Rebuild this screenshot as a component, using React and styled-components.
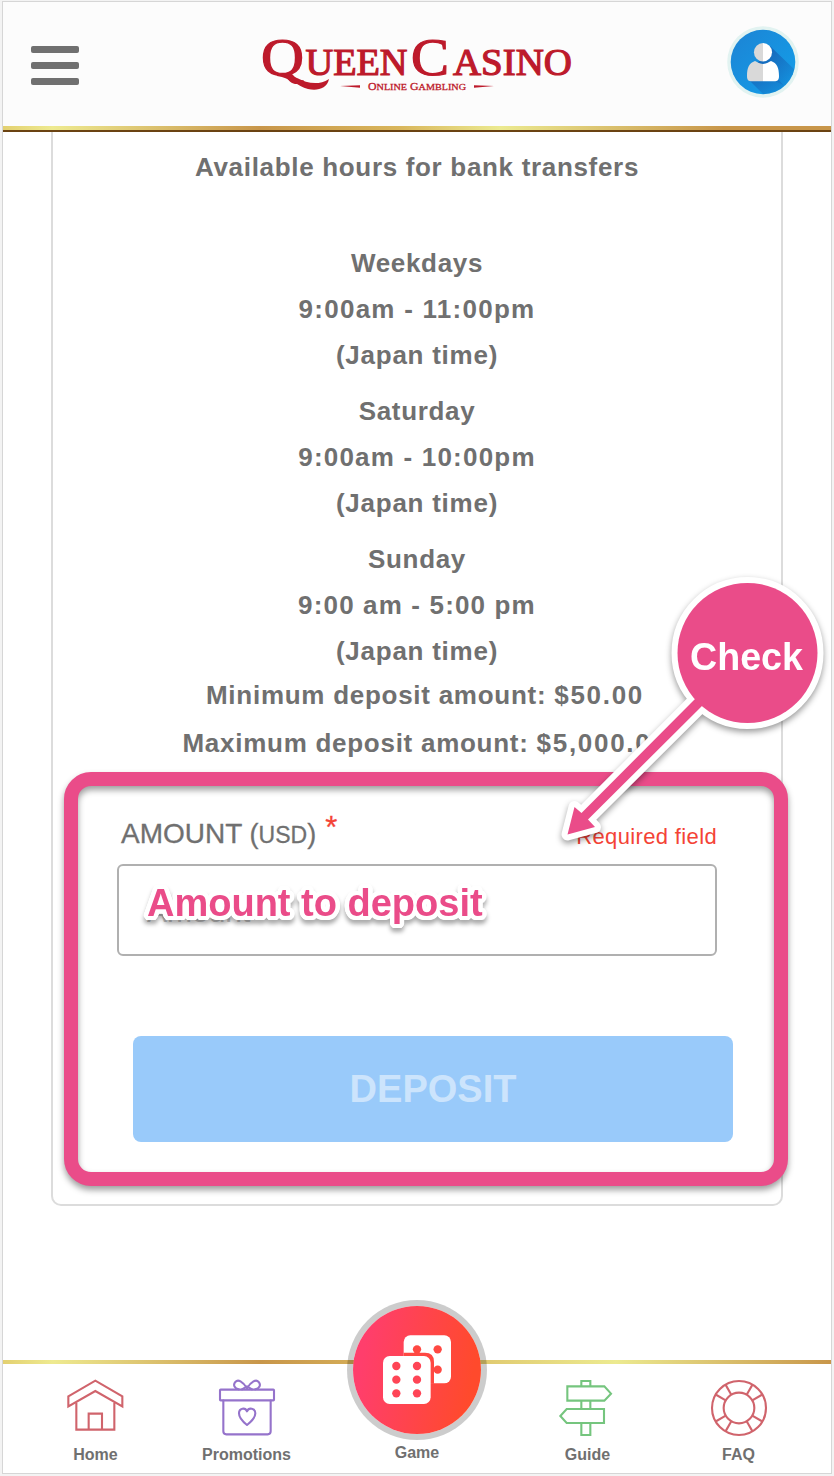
import React from 'react';
import styled, { createGlobalStyle } from 'styled-components';

const GlobalStyle = createGlobalStyle`
  * {
    box-sizing: border-box;
  }
  body {
    margin: 0;
    background: #f3f3f3;
    font-family: 'Liberation Sans', Arial, sans-serif;
    color: #707070;
  }
`;

const Screen = styled.div`
  position: relative;
  width: 830px;
  height: 1473px;
  margin: 1px 2px 2px;
  border: 1px solid #d6d6d6;
  background: #fff;
  display: flex;
  flex-direction: column;
`;

const Header = styled.header`
  flex: none;
  height: 124px;
  padding: 0 32px 4px 28px;
  display: flex;
  align-items: center;
  justify-content: space-between;
  background: #fcfcfc;
`;

const GoldLine = styled.div`
  flex: none;
  height: ${props => (props.$shaded ? 6 : 4)}px;
  border-bottom: ${props => (props.$shaded ? '2px solid #6b4312' : 'none')};
  background: linear-gradient(
    90deg,
    #e3d070 0%,
    #eeea90 6%,
    #c8964a 31%,
    #d9b65c 48%,
    #ecea90 ${props => (props.$shaded ? 60 : 74)}%,
    #c8964a ${props => (props.$shaded ? 87 : 100)}%
  );
`;

const MenuButton = styled.button`
  width: 48px;
  height: 39px;
  margin-top: 7px;
  padding: 0;
  border: 0;
  background: none;
  display: flex;
  flex-direction: column;
  justify-content: space-between;
`;

const MenuBar = styled.span`
  height: 7px;
  border-radius: 2px;
  background: #707070;
`;

const LogoSvg = styled.svg`
  width: 340px;
  height: 80px;
  margin-top: 6px;
  margin-left: 34px;
`;

const AvatarSvg = styled.svg`
  width: 72px;
  height: 72px;
`;

const Card = styled.main`
  flex: none;
  height: 1074px;
  margin: 0 48px;
  padding-top: 12px;
  border: 2px solid #dcdcdc;
  border-top: 0;
  border-radius: 0 0 10px 10px;
`;

const Line = styled.div`
  line-height: ${props => props.$height || 46}px;
  font-size: 26px;
  font-weight: bold;
  letter-spacing: ${props => props.$spacing || 0.68}px;
  text-align: center;
  white-space: nowrap;
`;

const Hours = styled.section`
  margin-top: 50px;
  display: flex;
  flex-direction: column;
  gap: 10px;
`;

const Limits = styled.section`
  margin-top: -3px;
  padding-left: 16px;
`;

const Money = styled.span`
  letter-spacing: 1.7px;
`;

const Form = styled.div`
  padding: 45px 64px 0;
`;

const FieldHead = styled.div`
  height: 52px;
  padding: 0 0 8px 4px;
  display: flex;
  align-items: center;
  justify-content: space-between;
`;

const Label = styled.label`
  display: flex;
  align-items: baseline;
  height: 44px;
  font-size: 28px;
  line-height: 44px;
  white-space: pre;
  -webkit-text-stroke: 0.3px currentColor;
`;

const Currency = styled.span`
  font-size: ${props => props.$size}px;
`;

const Star = styled.span`
  align-self: flex-start;
  margin-left: 9px;
  font-size: 31px;
  line-height: 32px;
  color: #f44336;
`;

const Required = styled.span`
  padding-top: 5px;
  font-size: 22px;
  letter-spacing: 0.36px;
  color: #f44336;
`;

const Input = styled.input`
  display: block;
  width: 100%;
  height: 92px;
  padding: 3px 28px 0;
  border: 2px solid #b0b0b0;
  border-radius: 6px;
  font: 30px 'Liberation Sans', Arial, sans-serif;
  &::placeholder {
    color: #c4c4c4;
    opacity: 1;
  }
`;

const DepositButton = styled.button`
  width: 600px;
  height: 106px;
  margin: 80px 0 0 16px;
  padding: 0;
  border: 0;
  border-radius: 8px;
  background: #99cafa;
  color: #cce4fc;
  font: bold 38px 'Liberation Sans', Arial, sans-serif;
`;

const Footer = styled.footer`
  margin-top: auto;
  height: 113px;
`;

const Tabs = styled.nav`
  display: grid;
  grid-template-columns: 151px 151px 190px 151px 151px;
  justify-content: center;
`;

const Tab = styled.a`
  display: flex;
  flex-direction: column;
  align-items: center;
  gap: ${props => (props.$raised ? 9 : 8)}px;
  margin-top: ${props => (props.$raised ? -58 : 13)}px;
  font-size: 16px;
  font-weight: bold;
  line-height: 20px;
`;

const TabIcon = styled.svg`
  width: 60px;
  height: 60px;
  fill: none;
  stroke: ${props => props.$color};
  stroke-width: 6.3;
`;

const GameCircle = styled.div`
  width: 128px;
  height: 128px;
  border-radius: 50%;
  box-shadow: 0 0 0 6px rgba(0, 0, 0, 0.2);
  background: linear-gradient(100deg, #ff3e6c 12%, #ff4a2c 88%);
`;

// Tutorial callouts that float above the page
const HighlightBox = styled.div`
  position: absolute;
  left: 61px;
  top: 770px;
  width: 724px;
  height: 414px;
  border: 14px solid #ea4c89;
  border-radius: 27px;
  filter: drop-shadow(0 4px 3px rgba(0, 0, 0, 0.38));
  pointer-events: none;
`;

// round white outline, one shadow per 15 degrees
const outline = Array.from({ length: 24 }, (_, i) => {
  const angle = (i * Math.PI) / 12;
  return `${(Math.cos(angle) * 4.4).toFixed(2)}px ${(Math.sin(angle) * 4.4).toFixed(2)}px 0 #fff`;
}).join(', ');

const Note = styled.div`
  position: absolute;
  left: 144px;
  top: 879px;
  font-size: 38px;
  font-weight: bold;
  line-height: 44px;
  white-space: nowrap;
  color: #ea4c89;
  text-shadow: ${outline};
  filter: drop-shadow(0 4px 2px rgba(0, 0, 0, 0.33));
`;

const Callout = styled.svg`
  position: absolute;
  left: 537px;
  top: 568px;
  width: 294px;
  height: 290px;
  overflow: visible;
  filter: drop-shadow(0 3px 3px rgba(0, 0, 0, 0.4));
`;

const Logo = () => (
  <LogoSvg
    viewBox="250 25 340 80"
    fill="#bd1a2b"
    stroke="#bd1a2b"
    fontFamily="'Liberation Serif', 'Times New Roman', serif"
  >
    <g strokeWidth="1.2">
      <text x="261" y="75.3" fontSize="53.5" textLength="43" lengthAdjust="spacingAndGlyphs">Q</text>
      <text x="305.5" y="75.3" fontSize="37.5" textLength="102" lengthAdjust="spacingAndGlyphs">UEEN</text>
      <text x="411" y="75.3" fontSize="53.5" textLength="38" lengthAdjust="spacingAndGlyphs">C</text>
      <text x="453" y="75.3" fontSize="37.5" textLength="119" lengthAdjust="spacingAndGlyphs">ASINO</text>
    </g>
    <path
      stroke="none"
      d="M277 75 C284 73 290 75 297 78 C307 83 318 86 329 79 C327 89 317 91 308 89 C297 86 291 78 277 76 Z"
    />
    <path stroke="none" d="M340 86 L360 85.2 V87.8 Z M494 86 L474 85.2 V87.8 Z" />
    <text x="368" y="90" fontSize="10.5" strokeWidth="0.3" textLength="98" lengthAdjust="spacingAndGlyphs">
      O<tspan fontSize="9">NLINE</tspan> G<tspan fontSize="9">AMBLING</tspan>
    </text>
  </LogoSvg>
);

const Avatar = () => (
  <AvatarSvg viewBox="-36 -36 72 72">
    <defs>
      <linearGradient id="sky" x1="0" y1="0" x2="1" y2="1">
        <stop offset="0" stopColor="#1d83d4" />
        <stop offset="1" stopColor="#12a0ea" />
      </linearGradient>
      <linearGradient id="longShadow" x1="0" y1="0" x2="1" y2="1">
        <stop offset="0.1" stopColor="#1565b8" />
        <stop offset="1" stopColor="#1565b8" stopOpacity="0" />
      </linearGradient>
      <clipPath id="disc">
        <circle r="32.3" />
      </clipPath>
    </defs>
    <circle r="35.8" fill="#e2f3f1" />
    <circle r="32.3" fill="url(#sky)" />
    <g clipPath="url(#disc)" fill="url(#longShadow)">
      <path d="M7 -16 L34 10 V30 L14 20 L-6 2 Z" />
      <path d="M-15 17 L5 37 L30 34 L15 17 Z" opacity="0.7" />
    </g>
    <path d="M0 -19 A9 9.2 0 0 0 0 -0.5 Z" fill="#d9d9d9" />
    <path d="M0 -19 A9 9.2 0 0 1 0 -0.5 Z" fill="#fff" />
    <path d="M0 2 C-4 1.7 -6 0 -8 -1 C-14 1 -16 6 -16 14 C-16 18 -14.5 19.3 -11 19.3 H0 Z" fill="#d9d9d9" />
    <path d="M0 2 C4 1.7 6 0 8 -1 C14 1 16 6 16 14 C16 18 14.5 19.3 11 19.3 H0 Z" fill="#fff" />
  </AvatarSvg>
);

const HomeIcon = () => (
  <TabIcon $color="#d0646c" viewBox="77 81 180 180">
    <path d="M84 139 L165 92 L246 139 V169 L165 123 L84 169 Z" />
    <path d="M108 158 V239 H222 V158 M145 239 V191 H185 V239" />
  </TabIcon>
);

const PromoIcon = () => (
  <TabIcon $color="#9573cb" viewBox="531 81 180 180" strokeLinejoin="round" strokeLinecap="round">
    <rect x="540" y="119" width="162" height="32" rx="2" />
    <path d="M550 152 V244 Q550 253 559 253 H683 Q692 253 692 244 V152" />
    <path d="M621 115 C608 94 594 87 586 96 C578 105 584 116 596 118 M621 115 C634 94 648 87 656 96 C664 105 658 116 646 118 M606 118 L621 109 L636 118" />
    <path d="M621 225 C608 215 597 204 597 190 C597 174 616 171 621 184 C626 171 646 174 646 190 C646 204 634 215 621 225 Z" />
  </TabIcon>
);

const GuideIcon = () => (
  <TabIcon $color="#75c57e" viewBox="54 81 180 180">
    <path d="M82 109 H193 L213 131 L193 152 H82 Z" />
    <path d="M192 177 V219 H80 L61 198 L80 177 Z" />
    <path d="M124 109 V93 H151 V109 M124 152 V177 M151 152 V177 M124 219 V255 H151 V219" />
  </TabIcon>
);

const FaqIcon = () => (
  <TabIcon $color="#d0646c" viewBox="507 81 180 180">
    <circle cx="597" cy="174" r="81" />
    <circle cx="597" cy="174" r="46" />
    {[30, 60, 120, 150, 210, 240, 300, 330].map(angle => (
      <path key={angle} d="M643 174 H678" transform={`rotate(${angle} 597 174)`} />
    ))}
  </TabIcon>
);

const Dice = () => (
  <svg width="128" height="128" viewBox="54 48 384 384">
    <rect x="206" y="136" width="142" height="144" rx="20" fill="#fff" />
    <g fill="#ff4842">
      <circle cx="246" cy="178" r="12.5" />
      <circle cx="308" cy="178" r="12.5" />
      <circle cx="308" cy="239" r="12.5" />
      <path d="M206 188 H270 Q297 188 297 215 V281 H206 Z" />
    </g>
    <rect x="144" y="198" width="143" height="144" rx="20" fill="#fff" />
    <g fill="#ff4556">
      {[228, 269, 310].map(y => (
        <React.Fragment key={y}>
          <circle cx="184" cy={y} r="12.5" />
          <circle cx="246" cy={y} r="12.5" />
        </React.Fragment>
      ))}
    </g>
  </svg>
);

const hours = [
  { day: 'Weekdays', time: '9:00am - 11:00pm', spacing: 1.25 },
  { day: 'Saturday', time: '9:00am - 10:00pm', spacing: 1.2 },
  { day: 'Sunday', time: '9:00 am - 5:00 pm', spacing: 1.15 },
];

const App = () => (
  <>
    <GlobalStyle />
    <Screen>
      <Header>
        <MenuButton aria-label="Menu">
          <MenuBar />
          <MenuBar />
          <MenuBar />
        </MenuButton>
        <Logo />
        <Avatar />
      </Header>
      <GoldLine $shaded />
      <Card>
        <Line>Available hours for bank transfers</Line>
        <Hours>
          {hours.map(item => (
            <div key={item.day}>
              <Line>{item.day}</Line>
              <Line $spacing={item.spacing}>{item.time}</Line>
              <Line $spacing={0.75}>(Japan time)</Line>
            </div>
          ))}
        </Hours>
        <Limits>
          <Line $height={48} $spacing={0.73}>
            Minimum deposit amount: <Money>$50.00</Money>
          </Line>
          <Line $height={48} $spacing={0.73}>
            Maximum deposit amount: <Money>$5,000.00</Money>
          </Line>
        </Limits>
        <Form>
          <FieldHead>
            <Label htmlFor="amount">
              AMOUNT <Currency $size={27}>(</Currency>
              <Currency $size={23}>USD</Currency>
              <Currency $size={27}>)</Currency>
              <Star>*</Star>
            </Label>
            <Required>Required field</Required>
          </FieldHead>
          <Input id="amount" placeholder="Amount" />
          <DepositButton>DEPOSIT</DepositButton>
        </Form>
      </Card>
      <Footer>
        <GoldLine />
        <Tabs>
          <Tab>
            <HomeIcon />
            Home
          </Tab>
          <Tab>
            <PromoIcon />
            Promotions
          </Tab>
          <Tab $raised>
            <GameCircle>
              <Dice />
            </GameCircle>
            Game
          </Tab>
          <Tab>
            <GuideIcon />
            Guide
          </Tab>
          <Tab>
            <FaqIcon />
            FAQ
          </Tab>
        </Tabs>
      </Footer>
      <HighlightBox />
      <Note>Amount to deposit</Note>
      <Callout viewBox="540 570 294 290">
        <g fill="#fff" stroke="#fff" strokeWidth="12" strokeLinejoin="round">
          <circle cx="747.5" cy="653" r="70" />
          <path d="M567.5 834.5 L574.5 807 L581.5 813 L697 697 L704 704 L588 819.5 L595 827 Z" />
        </g>
        <g fill="#ea4c89">
          <circle cx="747.5" cy="653" r="70" />
          <path d="M567.5 834.5 L574.5 807 L581.5 813 L697 697 L704 704 L588 819.5 L595 827 Z" />
        </g>
        <text
          x="690"
          y="670"
          fill="#fff"
          fontSize="38"
          fontWeight="bold"
          textLength="113"
          lengthAdjust="spacingAndGlyphs"
        >
          Check
        </text>
      </Callout>
    </Screen>
  </>
);

export default App;
